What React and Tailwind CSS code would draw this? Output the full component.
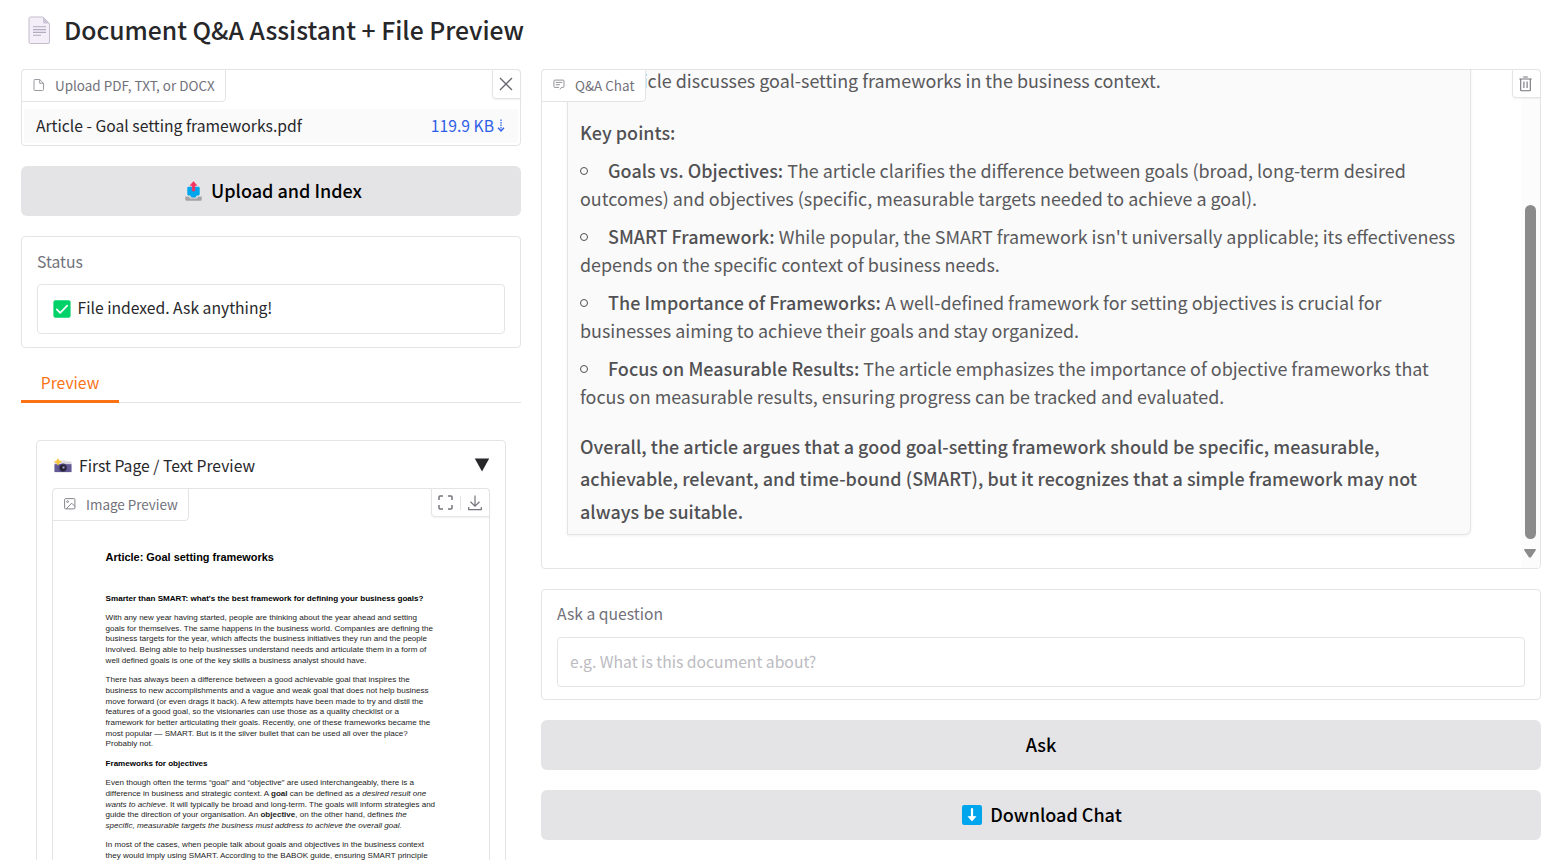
const SANS = "font-['Noto_Sans_CJK_SC','Noto_Sans',sans-serif]";

function PageEmoji() {
  return (
    <svg width="24" height="29" viewBox="0 0 24 29" className="shrink-0">
      <path d="M2.500 1H15l6.500 6.500V26a1.500 1.500 0 0 1-1.500 1.500H2.500A1.500 1.500 0 0 1 1 26V2.500A1.500 1.500 0 0 1 2.500 1z" fill="#f3eef8" stroke="#c5bdcd" strokeWidth="1" />
      <path d="M15 1l6.500 6.500H16.500A1.500 1.500 0 0 1 15 6z" fill="#cdc4d6" />
      <path d="M5 10.800h13M5 13.600h13M5 16.400h13M5 19.200h8" stroke="#b3a9bf" strokeWidth="1.100" />
    </svg>
  );
}

function OutboxEmoji() {
  return (
    <svg width="17" height="20" viewBox="0 0 17 20" className="shrink-0">
      <path d="M1.800 10.500h13.400l1.500 5H.3z" fill="#e9e9eb" />
      <path d="M.3 15h3.900l1.300 1.700h6l1.300-1.700h3.900V18.500a1.200 1.200 0 0 1-1.200 1.200h-14A1.200 1.200 0 0 1 .3 18.500z" fill="#a3a3a6" />
      <path d="M.3 14.800h3.900l1.300 1.700h6l1.300-1.700h3.900v1.200h-3.500l-1.400 1.700H5.100L3.700 16H.3z" fill="#d0d0d3" />
      <path d="M3.500 5.800h10a1.200 1.200 0 0 1 1.200 1.200v6.200c0 .6-.5 1.200-1.200 1.200h-1.600l-1.600 2H6.700l-1.600-2H3.500c-.7 0-1.200-.6-1.200-1.200V7c0-.7.5-1.200 1.200-1.200z" fill="#00a6ed" />
      <path d="M8.500 .6L11.900 4.400H9.800V9.300a.7.7 0 0 1-.7.7H7.900a.7.7 0 0 1-.7-.7V4.400H5.100z" fill="#f8315f" stroke="#f8315f" strokeWidth=".6" strokeLinejoin="round" />
    </svg>
  );
}

function CheckEmoji() {
  return (
    <svg width="18" height="18" viewBox="0 0 18 18" className="shrink-0">
      <rect x=".4" y=".2" width="17.200" height="17.600" rx="2" fill="#00d26a" />
      <path d="M3.800 9.300l3.400 3.500L14.200 5.600" fill="none" stroke="#fff" strokeWidth="1.700" strokeLinecap="round" strokeLinejoin="round" />
    </svg>
  );
}

function CameraEmoji() {
  return (
    <svg width="18" height="16" viewBox="0 0 18 16" className="shrink-0">
      <rect x=".5" y="3.400" width="17" height="11.200" rx="1" fill="#d9d6dd" />
      <path d="M5.500 4.200L7 2.400h5l1.500 1.800z" fill="#e2dfe6" />
      <rect x=".5" y="6.200" width="17" height="7.800" fill="#635994" />
      <circle cx="9" cy="9.800" r="4.300" fill="#433b6b" />
      <circle cx="9" cy="9.800" r="2.900" fill="#1c1c24" />
      <circle cx="9.500" cy="9.500" r="1.200" fill="#998ec4" />
      <path d="M4 .4l1.200 2.300L7.600 3.800 5.200 4.900 4 7.200 2.800 4.900.4 3.800l2.400-1.100z" fill="#fcc53f" stroke="#fcc53f" strokeWidth=".5" />
    </svg>
  );
}

function DownEmoji() {
  return (
    <svg width="20" height="20" viewBox="0 0 20 20" className="shrink-0">
      <rect width="20" height="20" rx="2.200" fill="#00a6ed" />
      <path d="M10 4v8" stroke="#fff" strokeWidth="2.200" strokeLinecap="round" />
      <path d="M6.200 11.600h7.600L10 16z" fill="#fff" stroke="#fff" strokeWidth=".8" strokeLinejoin="round" />
    </svg>
  );
}

function FileIcon() {
  return (
    <svg width="12" height="14" viewBox="0 0 12 14" className="shrink-0" fill="none" stroke="#9a9aa1" strokeWidth="1" strokeLinejoin="round">
      <path d="M6.700 1.500H2a1 1 0 0 0-1 1v9a1 1 0 0 0 1 1h7.500a1 1 0 0 0 1-1V5.300z" />
      <path d="M6.700 1.500v3.800h3.800" />
    </svg>
  );
}

function ImageIcon() {
  return (
    <svg width="12" height="12" viewBox="0 0 12 12" className="shrink-0" fill="none" stroke="#85858d" strokeWidth="1" strokeLinejoin="round">
      <rect x=".6" y=".6" width="10.300" height="10.300" rx="1" />
      <circle cx="3.600" cy="3.600" r=".9" />
      <path d="M2.200 10.800L7.700 5.200l3.200 3.200" />
    </svg>
  );
}

function ChatIcon() {
  return (
    <svg width="12" height="12" viewBox="0 0 13 12" className="shrink-0" fill="none" stroke="#8b8b93" strokeWidth="1">
      <path d="M7.500 10.800L9.200 8.600h1.700a1 1 0 0 0 1-1V1.700a1 1 0 0 0-1-1H2a1 1 0 0 0-1 1v5.900a1 1 0 0 0 1 1h4.600" strokeLinejoin="round" />
      <path d="M3 3.200h7M3 5.700h4.600" />
    </svg>
  );
}

function TrashIcon() {
  return (
    <svg width="13" height="16" viewBox="0 0 13 16" fill="none" stroke="#74747c" strokeWidth="1.100">
      <path d="M4.200 1h4.600M.3 3h12.400M1.700 3v11.200a.6.6 0 0 0 .6.6h8.400a.6.6 0 0 0 .6-.6V3M4.900 5.500v6.500M8.100 5.500v6.500" />
    </svg>
  );
}

function Label({ icon, gap, children, width }) {
  return (
    <div className={'absolute -left-px -top-px z-10 flex h-[33px] items-center rounded-br-[4px] rounded-tl-[4px] border border-[#e4e4e7] bg-white pb-[2px] pl-[11px] text-[13.45px] leading-5 text-[#71717a] ' + width}>
      {icon}
      <span className={'whitespace-nowrap ' + gap}>{children}</span>
    </div>
  );
}

function Line({ className = '', children }) {
  return <span className={'block whitespace-nowrap ' + className}>{children}</span>;
}

function B({ children }) {
  return <strong className="font-medium tracking-[0.04px] text-[#515154]">{children}</strong>;
}

function Item({ title, first, second }) {
  return (
    <li className="mb-[10px] leading-[28px]">
      <span className="flex items-center whitespace-nowrap">
        <span className="mr-5 mt-[2px] size-[8px] rounded-full border border-[#515154]" />
        <span><B>{title}</B> {first}</span>
      </span>
      <Line>{second}</Line>
    </li>
  );
}

function Button({ icon, className = '', children }) {
  return (
    <button className={'flex h-[50px] w-full shrink-0 items-center justify-center rounded-[6px] bg-[#e4e4e7] text-[18px] font-medium leading-7 text-black ' + className}>
      {icon}
      <span className="pb-[2px]">{children}</span>
    </button>
  );
}

function Para({ lines, className = '' }) {
  return (
    <p className={'mb-[9px] ' + className}>
      {lines.map((l, i) => <Line key={i}>{l}</Line>)}
    </p>
  );
}

function DocumentPage() {
  return (
    <div className="pl-[52.6px] pt-[60px] font-['Liberation_Sans',sans-serif] text-[8.05px] leading-[10.65px] text-[#1c1c1c]">
      <h1 className="mb-[29px] whitespace-nowrap text-[10.95px] font-bold leading-4 text-black">Article: Goal setting frameworks</h1>
      <h2 className="mb-[8.500px] whitespace-nowrap text-[8.08px] font-bold text-black">Smarter than SMART: what's the best framework for defining your business goals?</h2>
      <Para
        lines={[
          'With any new year having started, people are thinking about the year ahead and setting',
          'goals for themselves. The same happens in the business world. Companies are defining the',
          'business targets for the year, which affects the business initiatives they run and the people',
          'involved. Being able to help businesses understand needs and articulate them in a form of',
          'well defined goals is one of the key skills a business analyst should have.',
        ]}
      />
      <Para
        lines={[
          'There has always been a difference between a good achievable goal that inspires the',
          'business to new accomplishments and a vague and weak goal that does not help business',
          'move forward (or even drags it back). A few attempts have been made to try and distil the',
          'features of a good goal, so the visionaries can use those as a quality checklist or a',
          'framework for better articulating their goals. Recently, one of these frameworks became the',
          'most popular — SMART. But is it the silver bullet that can be used all over the place?',
          'Probably not.',
        ]}
      />
      <h2 className="mb-[8.500px] whitespace-nowrap font-bold text-black">Frameworks for objectives</h2>
      <Para
        lines={[
          'Even though often the terms “goal” and “objective” are used interchangeably, there is a',
          <>difference in business and strategic context. A <b>goal</b> can be defined as <i>a desired result one</i></>,
          <><i>wants to achieve</i>. It will typically be broad and long-term. The goals will inform strategies and</>,
          <>guide the direction of your organisation. An <b>objective</b>, on the other hand, defines <i>the</i></>,
          <i>specific, measurable targets the business must address to achieve the overall goal.</i>,
        ]}
      />
      <Para
        lines={[
          'In most of the cases, when people talk about goals and objectives in the business context',
          'they would imply using SMART. According to the BABOK guide, ensuring SMART principle',
        ]}
      />
    </div>
  );
}

export default function App() {
  return (
    <div className={'h-[860px] overflow-hidden bg-white pl-[21px] pr-[13px] text-[#27272a] ' + SANS}>
      <header className="flex h-[69px] items-center gap-[12px] pb-[9px] pl-[7px]">
        <PageEmoji />
        <h1 className="pb-[2px] text-[24.7px] font-medium leading-8">Document Q&amp;A Assistant + File Preview</h1>
      </header>

      <main className="flex gap-5">
        <section className="flex w-[500px] shrink-0 flex-col">
          <div className="relative h-[77px] shrink-0 rounded-[4px] border border-[#e4e4e7] px-[2px] pt-[39px]">
            <Label icon={<FileIcon />} gap="ml-[10px]" width="w-[205px]">Upload PDF, TXT, or DOCX</Label>
            <button className="absolute -right-px -top-px flex h-[30px] w-[29px] items-center justify-center rounded-bl-[4px] rounded-tr-[4px] border border-[#e4e4e7] bg-white pb-px pr-[2px] shadow-[0_1px_2px_rgba(0,0,0,0.06)]">
              <svg width="14" height="14" viewBox="0 0 14 14" stroke="#66666e" strokeWidth="1.300"><path d="M1 1l12 12M13 1L1 13" /></svg>
            </button>
            <div className="flex h-[34px] items-center justify-between bg-[#fafafa] pl-3 pr-[13px] text-[15.7px] leading-6">
              <span>Article - Goal setting frameworks.pdf</span>
              <a className="flex items-center gap-[3px] text-[#2f5fe8]">
                119.9 KB
                <svg width="8" height="13" viewBox="0 0 8 13" fill="none" stroke="#2f5fe8" className="-mt-px"><path d="M4 .5v12" strokeWidth="1.300" strokeDasharray="1.600 .9" /><path d="M1 8.800l3 3.200 3-3.200" strokeWidth="1.300" /></svg>
              </a>
            </div>
          </div>

          <div className="mt-5 flex shrink-0"><Button className="gap-[9px] pl-[5px]" icon={<OutboxEmoji />}>Upload and Index</Button></div>

          <div className="mt-5 h-[112px] shrink-0 rounded-[4px] border border-[#e4e4e7] px-[15px] pt-[13px] text-[15.7px] leading-6">
            <div className="mb-[10px] text-[#71717a]">Status</div>
            <div className="flex h-[50px] items-center gap-[6.500px] rounded-[4px] border border-[#e4e4e7] pl-[15px]">
              <CheckEmoji />
              <span className="pb-[2px]">File indexed. Ask anything!</span>
            </div>
          </div>

          <div className="mt-[15px] flex h-[40px] shrink-0 border-b border-[#e4e4e7]">
            <div className="flex h-[40px] w-[98px] items-center justify-center border-b-[3px] border-[#f97316] pt-[2px] text-[15.7px] leading-6 text-[#f97316]">Preview</div>
          </div>

          <div className="mx-[15px] mt-[37px] h-[600px] shrink-0 rounded-[4px] border border-[#e4e4e7] px-[15px]">
            <div className="flex h-[47px] items-center justify-between pl-[2px] text-[15.7px] leading-6">
              <span className="flex items-center gap-[7px] pt-[3px]"><CameraEmoji />First Page / Text Preview</span>
              <svg width="16" height="14" viewBox="0 0 16 14" className="mt-px"><path d="M.8 .6h14.400L8 13.400z" fill="#27272a" /></svg>
            </div>
            <div className="relative h-[560px] rounded-[4px] border border-[#e4e4e7]">
              <Label icon={<ImageIcon />} gap="ml-[10px]" width="w-[137px]">Image Preview</Label>
              <div className="absolute -right-px -top-px flex h-[29px] w-[59px] items-center justify-between rounded-bl-[4px] rounded-tr-[4px] border border-[#e4e4e7] bg-white pl-[6px] pr-[7px] shadow-[0_1px_2px_rgba(0,0,0,0.06)]">
                <svg width="15" height="15" viewBox="0 0 15 15" fill="none" stroke="#74747c" strokeWidth="1.500"><path d="M1 5V2a1 1 0 0 1 1-1h3M10 1h3a1 1 0 0 1 1 1v3M14 10v3a1 1 0 0 1-1 1h-3M5 14H2a1 1 0 0 1-1-1v-3" /></svg>
                <span className="h-[14px] w-px bg-[#e4e4e7]" />
                <svg width="14" height="16" viewBox="0 0 14 16" fill="none" stroke="#74747c" strokeWidth="1.200"><path d="M7 .5v10.500M2.500 6.800L7 11.200l4.500-4.400M.7 12v2.700h12.600V12" /></svg>
              </div>
              <DocumentPage />
            </div>
          </div>
        </section>

        <section className="flex w-[1000px] shrink-0 flex-col gap-5">
          <div className="relative h-[500px] shrink-0 rounded-[4px] border border-[#e4e4e7]">
            <Label icon={<ChatIcon />} gap="ml-[10px]" width="w-[105px]">Q&amp;A Chat</Label>
            <button className="absolute -right-px -top-px z-10 flex h-[29px] w-[29px] items-center justify-center rounded-bl-[4px] rounded-tr-[4px] border border-[#e4e4e7] bg-white pr-[2px] shadow-[0_1px_2px_rgba(0,0,0,0.06)]">
              <TrashIcon />
            </button>
            <div className="flex h-full overflow-hidden rounded-[3px]">
              <div className="flex flex-1 flex-col justify-end pb-[33px] pl-[25px] pr-[50px]">
                <div className="rounded-br-[6px] border border-[#e4e4e7] bg-[#fafafa] px-3 pb-[7px] text-[17.91px] text-[#59595c] shadow-[0_1px_3px_rgba(0,0,0,0.06)]">
                  <p className="mb-[20px] leading-[32.5px]"><Line>This article discusses goal-setting frameworks in the business context.</Line></p>
                  <p className="mb-[7px] leading-[32.5px]"><B>Key points:</B></p>
                  <ul>
                    <Item title="Goals vs. Objectives:" first="The article clarifies the difference between goals (broad, long-term desired" second="outcomes) and objectives (specific, measurable targets needed to achieve a goal)." />
                    <Item title="SMART Framework:" first="While popular, the SMART framework isn't universally applicable; its effectiveness" second="depends on the specific context of business needs." />
                    <Item title="The Importance of Frameworks:" first="A well-defined framework for setting objectives is crucial for" second="businesses aiming to achieve their goals and stay organized." />
                    <Item title="Focus on Measurable Results:" first="The article emphasizes the importance of objective frameworks that" second="focus on measurable results, ensuring progress can be tracked and evaluated." />
                  </ul>
                  <p className="mt-[20px] leading-[32.5px]">
                    <Line><B>Overall, the article argues that a good goal-setting framework should be specific, measurable,</B></Line>
                    <Line><B>achievable, relevant, and time-bound (SMART), but it recognizes that a simple framework may not</B></Line>
                    <Line><B>always be suitable.</B></Line>
                  </p>
                </div>
              </div>
              <div className="flex w-[19px] shrink-0 flex-col items-center bg-[#fcfcfc] pr-px pt-[135px]">
                <div className="h-[334px] w-[11px] shrink-0 rounded-full bg-[#8b8b8b]" />
                <svg width="12" height="10" viewBox="0 0 12 10" className="mt-[10px] shrink-0"><path d="M.8 .8h10.400L6.500 7.800h-1z" fill="#8b8b8b" stroke="#8b8b8b" strokeWidth="1.400" strokeLinejoin="round" /></svg>
              </div>
            </div>
          </div>

          <div className="h-[111px] shrink-0 rounded-[4px] border border-[#e4e4e7] px-[15px] pt-[12px] text-[15.7px] leading-6">
            <div className="mb-[11px] text-[#71717a]">Ask a question</div>
            <div className="flex h-[50px] items-center rounded-[4px] border border-[#e4e4e7] pl-3 text-[#bbbbc1]">e.g. What is this document about?</div>
          </div>

          <Button>Ask</Button>
          <Button className="gap-[8px] pl-[2px]" icon={<DownEmoji />}>Download Chat</Button>
        </section>
      </main>
    </div>
  );
}
